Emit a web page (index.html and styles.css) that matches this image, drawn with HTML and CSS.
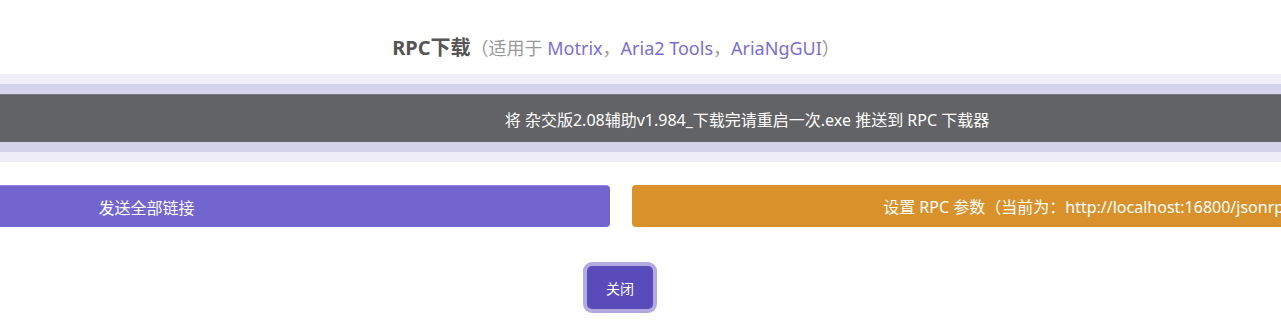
FILE: index.html
```html
<!DOCTYPE html>
<html lang="zh-CN">

<head>
    <meta charset="UTF-8">
    <meta name="viewport" content="width=device-width, initial-scale=1.0">
    <title>RPC下载</title>
    <link rel="stylesheet" href="styles.css">
</head>

<body>
    <div class="dialog">
        <div class="title">
            <b>RPC下载</b>（适用于 <span class="link">Motrix</span>，<span class="link">Aria2 Tools</span>，<span class="link">AriaNgGUI</span>）
        </div>

        <button class="push">将 杂交版2.08辅助v1.984_下载完请重启一次.exe 推送到 RPC 下载器</button>

        <div class="actions">
            <button class="btn btn_all">发送全部链接</button>
            <button class="btn btn_set">设置 RPC 参数（当前为：http://localhost:16800/jsonrpc）</button>
        </div>

        <button class="close">关闭</button>
    </div>
</body>

</html>
```

FILE: styles.css
```css
body {
    margin: 0;
    padding: 0;
    width: 100%;
    height: 100vh;
    overflow: hidden;
    background-color: #fff;
    font-family: "Noto Sans", "Noto Sans CJK SC", sans-serif;
}

.dialog {
    width: 1876px;
    margin-left: -317px;
    padding-top: 36px;
    display: flex;
    flex-direction: column;
    align-items: center;
}

.title {
    height: 24px;
    line-height: 24px;
    font-size: 18px;
    color: #999;
    margin-right: 10px;
}

.title b {
    font-size: 20px;
    color: #555;
}

.title .link {
    color: #7b6fd0;
}

.push {
    align-self: stretch;
    margin-top: 34px;
    height: 48px;
    padding: 0 0 0 252px;
    border: none;
    border-top: 1px solid #77777d;
    background-color: #626366;
    box-shadow: 0 0 0 10px #d5d3ec, 0 0 0 20px #f0eff9;
    color: #fff;
    font-family: inherit;
    font-size: 16px;
}

.actions {
    align-self: stretch;
    display: grid;
    grid-template-columns: 1fr 1fr;
    gap: 22px;
    margin-top: 43px;
}

.btn {
    height: 42px;
    border: none;
    border-radius: 4px;
    color: #fff;
    font-family: inherit;
    font-size: 16px;
}

.btn_all {
    background-color: #7265cf;
    border-top: 1px solid #9186dc;
}

.btn_set {
    background-color: #d9922b;
}

.close {
    margin-top: 39px;
    margin-right: 2px;
    width: 66px;
    height: 43px;
    border: none;
    border-radius: 5px;
    background-color: #5a4bbb;
    box-shadow: 0 0 0 4px #b3aae2;
    color: #fff;
    font-family: inherit;
    font-size: 14px;
}
```
